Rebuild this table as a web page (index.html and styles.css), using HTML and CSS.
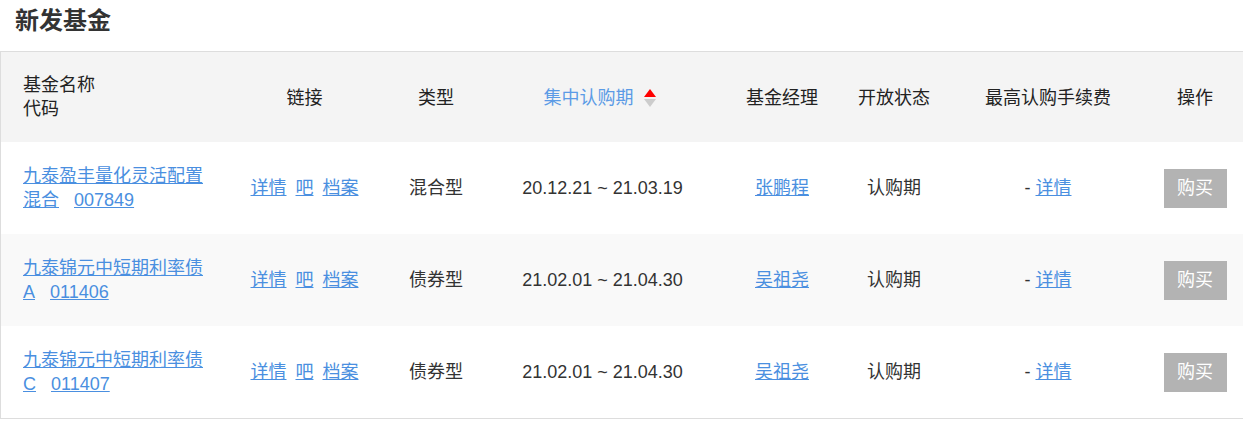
FILE: index.html
```html
<!DOCTYPE html>
<html lang="zh-CN">
<head>
<meta charset="utf-8">
<title>新发基金</title>
<link rel="stylesheet" href="styles.css">
</head>
<body>
<h2 class="title">新发基金</h2>
<div class="table">
  <div class="row head">
    <div class="cell c-name"><span class="name-box">基金名称<br>代码</span></div>
    <div class="cell">链接</div>
    <div class="cell">类型</div>
    <div class="cell sort">集中认购期<span class="arrows"><i class="up"></i><i class="down"></i></span></div>
    <div class="cell">基金经理</div>
    <div class="cell">开放状态</div>
    <div class="cell">最高认购手续费</div>
    <div class="cell">操作</div>
  </div>

  <div class="row">
    <div class="cell c-name"><span class="name-box"><a href="#">九泰盈丰量化灵活配置混合</a><a class="code" href="#">007849</a></span></div>
    <div class="cell links"><a href="#">详情</a><a href="#">吧</a><a href="#">档案</a></div>
    <div class="cell">混合型</div>
    <div class="cell">20.12.21 ~ 21.03.19</div>
    <div class="cell"><a href="#">张鹏程</a></div>
    <div class="cell">认购期</div>
    <div class="cell"><span>- <a href="#">详情</a></span></div>
    <div class="cell"><span class="buy">购买</span></div>
  </div>

  <div class="row alt">
    <div class="cell c-name"><span class="name-box"><a href="#">九泰锦元中短期利率债A</a><a class="code" href="#">011406</a></span></div>
    <div class="cell links"><a href="#">详情</a><a href="#">吧</a><a href="#">档案</a></div>
    <div class="cell">债券型</div>
    <div class="cell">21.02.01 ~ 21.04.30</div>
    <div class="cell"><a href="#">吴祖尧</a></div>
    <div class="cell">认购期</div>
    <div class="cell"><span>- <a href="#">详情</a></span></div>
    <div class="cell"><span class="buy">购买</span></div>
  </div>

  <div class="row">
    <div class="cell c-name"><span class="name-box"><a href="#">九泰锦元中短期利率债C</a><a class="code" href="#">011407</a></span></div>
    <div class="cell links"><a href="#">详情</a><a href="#">吧</a><a href="#">档案</a></div>
    <div class="cell">债券型</div>
    <div class="cell">21.02.01 ~ 21.04.30</div>
    <div class="cell"><a href="#">吴祖尧</a></div>
    <div class="cell">认购期</div>
    <div class="cell"><span>- <a href="#">详情</a></span></div>
    <div class="cell"><span class="buy">购买</span></div>
  </div>
</div>
</body>
</html>
```

FILE: styles.css
```css
html, body {
  margin: 0;
  padding: 0;
  overflow: hidden;
  background: #fff;
}

body {
  font-family: "Liberation Sans", "Noto Sans CJK SC", sans-serif;
  font-size: 18px;
  color: #333;
}

.title {
  margin: 0;
  height: 51px;
  line-height: 42px;
  padding-left: 15px;
  font-size: 24px;
  font-weight: bold;
  color: #333;
}

.table {
  width: 1250px;
  border: 1px solid #ddd;
}

.row {
  display: grid;
  grid-template-columns: 214px 179px 84px 249px 110px 114px 194px 100px;
  height: 92px;
  background: #fff;
}

.row.head {
  height: 90px;
  background: #f4f4f4;
  color: #222;
}

.row.head .cell {
  padding-top: 2px;
}

.row.head .cell.c-name {
  padding-top: 0;
}

.row.alt {
  background: #f9f9f9;
}

.cell {
  display: flex;
  align-items: center;
  justify-content: center;
  line-height: 24px;
  white-space: nowrap;
}

.cell.c-name {
  justify-content: flex-start;
  padding-left: 22px;
  white-space: normal;
}

.name-box {
  width: 186px;
}

a {
  color: #4a8fe0;
  text-decoration: underline;
}

.code {
  margin-left: 15px;
}

.links a + a {
  margin-left: 9px;
}

.sort {
  color: #5b9be6;
  padding-right: 6px;
}

.arrows {
  display: inline-flex;
  flex-direction: column;
  gap: 2px;
  margin-left: 10px;
}

.arrows i {
  display: block;
  width: 0;
  height: 0;
  border-left: 6.5px solid transparent;
  border-right: 6.5px solid transparent;
}

.arrows .up {
  border-bottom: 8px solid #f00;
}

.arrows .down {
  border-top: 8px solid #ccc;
}

.buy {
  display: inline-flex;
  align-items: center;
  justify-content: center;
  width: 63px;
  height: 39px;
  background: #b3b3b3;
  color: #fff;
}
```
